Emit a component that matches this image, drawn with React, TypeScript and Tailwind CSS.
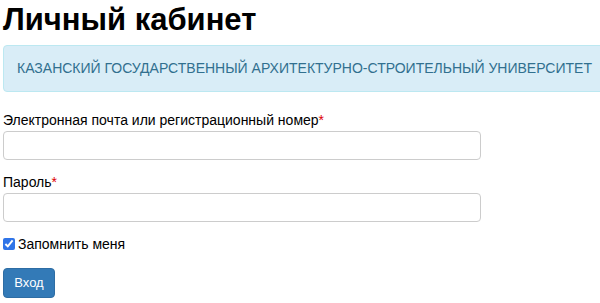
import React from "react";

export default function App() {
  return (
    <div className="w-[600px] h-[303px] overflow-hidden bg-white pl-[3px] text-[#333]" style={{ fontFamily: '"Liberation Sans", Arial, sans-serif' }}>
      <h1 className="text-[31px] leading-[36px] font-bold text-black pt-[2px] m-0">Личный кабинет</h1>
      <div className="mt-[7px] w-[620px] h-[47px] bg-[#d9edf7] border border-[#bce8f1] rounded-[4px] text-[#31708f] text-[14px] flex items-center pl-[13px]">
        КАЗАНСКИЙ ГОСУДАРСТВЕННЫЙ АРХИТЕКТУРНО-СТРОИТЕЛЬНЫЙ УНИВЕРСИТЕТ
      </div>
      <div className="mt-[18px] flex flex-col">
        <label className="text-[14px] leading-[20px] text-black">
          Электронная почта или регистрационный номер<span className="text-[#d00]">*</span>
        </label>
        <input className="mt-[1px] w-[478px] h-[29px] border border-[#ccc] rounded-[4px] outline-none" />
      </div>
      <div className="mt-[12px] flex flex-col">
        <label className="text-[14px] leading-[20px] text-black">
          Пароль<span className="text-[#d00]">*</span>
        </label>
        <input type="password" className="mt-[1px] w-[478px] h-[29px] border border-[#ccc] rounded-[4px] outline-none" />
      </div>
      <label className="mt-[12px] flex items-center gap-[3px] text-[14px] leading-[20px] text-black">
        <input type="checkbox" defaultChecked className="w-[12px] h-[12px] m-0 accent-[#2f74e8]" />
        Запомнить меня
      </label>
      <button className="mt-[14px] w-[52px] h-[30px] bg-[#337ab7] border border-[#2e6da4] rounded-[4px] text-white text-[13px]">
        Вход
      </button>
    </div>
  );
}
